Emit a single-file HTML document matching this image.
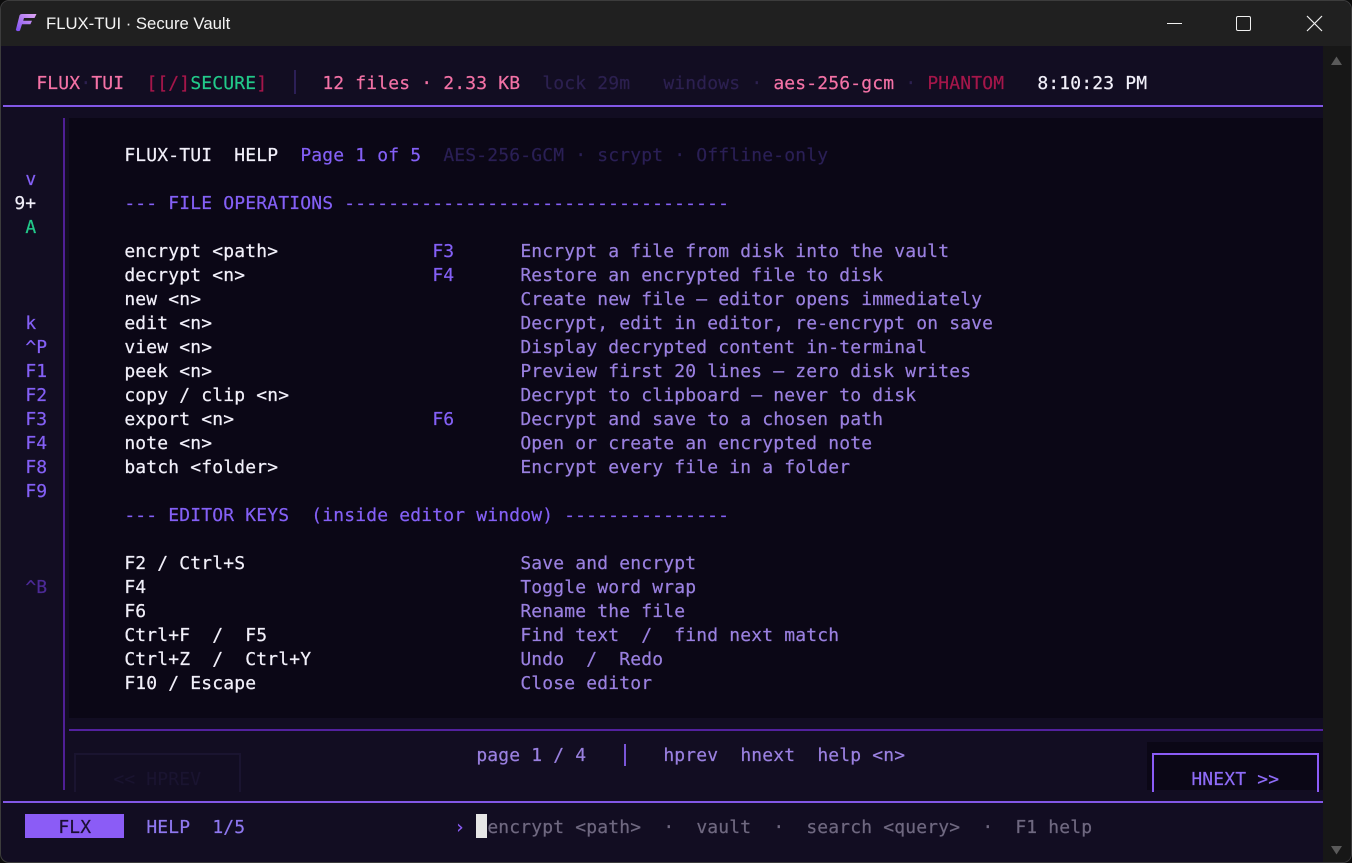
<!DOCTYPE html>
<html><head><meta charset="utf-8">
<style>
html,body{margin:0;padding:0;width:1352px;height:863px;overflow:hidden;background:#0c0c0c}
#w{position:absolute;left:0;top:0;width:1350px;height:861px;border:1px solid #3c3c3c;border-radius:9px;overflow:hidden;background:#120d22}
#r{position:absolute;left:-1px;top:-1px;width:1352px;height:863px}
.b{position:absolute}
.t{position:absolute;margin:1px 0 0 -.7px;font-family:"DejaVu Sans Mono","Liberation Mono",monospace;font-size:18px;line-height:24px;height:24px;white-space:pre;letter-spacing:.16px;color:#fff;-webkit-text-stroke:.2px currentColor}
.w{color:#f2f0fa}.p{color:#8b5cf6}.d{color:#9a80e0}.v{color:#8460f6}.k{color:#f472a6}.c{color:#a5164a}.g{color:#22c98a}.m{color:#2c2050}.m2{color:#2a1f55}
.dim{color:#6f6880}
</style></head><body>
<div id="w"><div id="r">
<div class="b" style="left:0;top:0;width:1352px;height:46px;background:#202020"></div>
<svg class="b" style="left:14px;top:13px" width="24" height="20" viewBox="0 0 24 20"><defs><linearGradient id="f" x1="0" y1="1" x2="1" y2="0"><stop offset="0" stop-color="#7c4df0"/><stop offset="1" stop-color="#e2a8f5"/></linearGradient></defs><path d="M5.5 2.5Q6 1 8 1H22.5L20.5 5H10L9.2 7.8H18L16.4 11.2H8L6 17.5Q5 18.5 3 18L1.8 17Z" fill="url(#f)"/></svg>
<div class="b" style="left:46px;top:13px;font:16.7px/22px 'Liberation Sans',sans-serif;color:#f4f4f4;white-space:pre">FLUX-TUI · Secure Vault</div>
<div class="b" style="left:1167px;top:23px;width:15px;height:1px;background:#f0f0f0"></div>
<div class="b" style="left:1236px;top:16px;width:13px;height:13px;border:1.3px solid #f0f0f0;border-radius:2px"></div>
<svg class="b" style="left:1306px;top:15px" width="17" height="17" viewBox="0 0 17 17"><path d="M1 1L16 16M16 1L1 16" stroke="#f0f0f0" stroke-width="1.2" fill="none"/></svg>

<div class="b" style="left:1323px;top:46px;width:29px;height:817px;background:#171717"></div>
<svg class="b" style="left:1330px;top:56px" width="13" height="10"><path d="M6.5 0.5L12 9H1Z" fill="#5a5a5a"/></svg>
<svg class="b" style="left:1330px;top:845px" width="13" height="10"><path d="M1 1H12L6.5 9.5Z" fill="#5a5a5a"/></svg>

<div class="b" style="left:3px;top:105px;width:1320px;height:2px;background:#8257e6"></div>
<div class="b" style="left:294px;top:70px;width:2px;height:24px;background:#2c1f57"></div>
<div class="b" style="left:69px;top:118px;width:1254px;height:600px;background:#0b0716"></div>
<div class="b" style="left:63px;top:118px;width:2px;height:672px;background:#4f1f96"></div>
<div class="b" style="left:69px;top:729px;width:1254px;height:2px;background:#53219f"></div>
<div class="b" style="left:624px;top:744px;width:2px;height:22px;background:#7a55d8"></div>
<div class="b" style="left:1147px;top:742px;width:176px;height:48px;background:#0b0716"></div>
<div class="b" style="left:1152px;top:753px;width:163px;height:37px;border:2px solid #8b5cf6;border-bottom:0"></div>
<div class="b" style="left:74px;top:753px;width:163px;height:37px;border:2px solid #1a1430;border-bottom:0"></div>
<div class="b" style="left:3px;top:801px;width:1320px;height:2px;background:#8257e6"></div>
<div class="b" style="left:25px;top:814px;width:99px;height:24px;background:#8b5cf6"></div>
<div class="b" style="left:476px;top:814px;width:11px;height:24px;background:#e6e6e6"></div>

<span class="t k" style="left:37px;top:71px">FLUX</span><span class="t m" style="left:81px;top:71px">·</span><span class="t k" style="left:92px;top:71px">TUI</span>
<span class="t c" style="left:147px;top:71px">[[/]</span><span class="t g" style="left:191px;top:71px">SECURE</span><span class="t c" style="left:257px;top:71px">]</span>
<span class="t k" style="left:323px;top:71px">12 files · 2.33 KB</span>
<span class="t m" style="left:543px;top:71px">lock 29m</span>
<span class="t m" style="left:664px;top:71px">windows</span><span class="t m" style="left:752px;top:71px">·</span>
<span class="t k" style="left:774px;top:71px">aes-256-gcm</span><span class="t m" style="left:906px;top:71px">·</span>
<span class="t c" style="left:928px;top:71px">PHANTOM</span>
<span class="t w" style="left:1038px;top:71px">8:10:23 PM</span>

<span class="t v" style="left:26px;top:167px">v</span>
<span class="t w" style="left:15px;top:191px">9+</span>
<span class="t g" style="left:26px;top:215px">A</span>
<span class="t v" style="left:26px;top:311px">k</span>
<span class="t v" style="left:26px;top:335px">^P</span>
<span class="t v" style="left:26px;top:359px">F1</span>
<span class="t v" style="left:26px;top:383px">F2</span>
<span class="t v" style="left:26px;top:407px">F3</span>
<span class="t v" style="left:26px;top:431px">F4</span>
<span class="t v" style="left:26px;top:455px">F8</span>
<span class="t v" style="left:26px;top:479px">F9</span>
<span class="t" style="left:26px;top:575px;color:#4c2a96">^B</span>

<span class="t w" style="left:125px;top:143px">FLUX-TUI  HELP</span>
<span class="t v" style="left:301px;top:143px">Page 1 of 5</span>
<span class="t m2" style="left:444px;top:143px">AES-256-GCM · scrypt · Offline-only</span>
<span class="t v" style="left:125px;top:191px">--- FILE OPERATIONS -----------------------------------</span>

<span class="t w" style="left:125px;top:239px">encrypt &lt;path&gt;</span><span class="t v" style="left:433px;top:239px">F3</span><span class="t d" style="left:521px;top:239px">Encrypt a file from disk into the vault</span>
<span class="t w" style="left:125px;top:263px">decrypt &lt;n&gt;</span><span class="t v" style="left:433px;top:263px">F4</span><span class="t d" style="left:521px;top:263px">Restore an encrypted file to disk</span>
<span class="t w" style="left:125px;top:287px">new &lt;n&gt;</span><span class="t d" style="left:521px;top:287px">Create new file — editor opens immediately</span>
<span class="t w" style="left:125px;top:311px">edit &lt;n&gt;</span><span class="t d" style="left:521px;top:311px">Decrypt, edit in editor, re-encrypt on save</span>
<span class="t w" style="left:125px;top:335px">view &lt;n&gt;</span><span class="t d" style="left:521px;top:335px">Display decrypted content in-terminal</span>
<span class="t w" style="left:125px;top:359px">peek &lt;n&gt;</span><span class="t d" style="left:521px;top:359px">Preview first 20 lines — zero disk writes</span>
<span class="t w" style="left:125px;top:383px">copy / clip &lt;n&gt;</span><span class="t d" style="left:521px;top:383px">Decrypt to clipboard — never to disk</span>
<span class="t w" style="left:125px;top:407px">export &lt;n&gt;</span><span class="t v" style="left:433px;top:407px">F6</span><span class="t d" style="left:521px;top:407px">Decrypt and save to a chosen path</span>
<span class="t w" style="left:125px;top:431px">note &lt;n&gt;</span><span class="t d" style="left:521px;top:431px">Open or create an encrypted note</span>
<span class="t w" style="left:125px;top:455px">batch &lt;folder&gt;</span><span class="t d" style="left:521px;top:455px">Encrypt every file in a folder</span>

<span class="t v" style="left:125px;top:503px">--- EDITOR KEYS  (inside editor window) ---------------</span>

<span class="t w" style="left:125px;top:551px">F2 / Ctrl+S</span><span class="t d" style="left:521px;top:551px">Save and encrypt</span>
<span class="t w" style="left:125px;top:575px">F4</span><span class="t d" style="left:521px;top:575px">Toggle word wrap</span>
<span class="t w" style="left:125px;top:599px">F6</span><span class="t d" style="left:521px;top:599px">Rename the file</span>
<span class="t w" style="left:125px;top:623px">Ctrl+F  /  F5</span><span class="t d" style="left:521px;top:623px">Find text  /  find next match</span>
<span class="t w" style="left:125px;top:647px">Ctrl+Z  /  Ctrl+Y</span><span class="t d" style="left:521px;top:647px">Undo  /  Redo</span>
<span class="t w" style="left:125px;top:671px">F10 / Escape</span><span class="t d" style="left:521px;top:671px">Close editor</span>

<span class="t d" style="left:477px;top:743px">page 1 / 4</span>
<span class="t d" style="left:664px;top:743px">hprev</span>
<span class="t d" style="left:741px;top:743px">hnext</span>
<span class="t d" style="left:818px;top:743px">help &lt;n&gt;</span>
<span class="t" style="left:114px;top:767px;color:#1a1430">&lt;&lt; HPREV</span>
<span class="t v" style="left:1192px;top:767px;color:#8f6cf8">HNEXT &gt;&gt;</span>

<span class="t" style="left:59px;top:815px;color:#1a0f33">FLX</span>
<span class="t v" style="left:147px;top:815px;color:#8f78f0">HELP</span>
<span class="t v" style="left:213px;top:815px;color:#8f78f0">1/5</span>
<span class="t p" style="left:455px;top:815px">›</span>
<span class="t dim" style="left:488px;top:815px">encrypt &lt;path&gt;</span>
<span class="t dim" style="left:664px;top:815px">·</span>
<span class="t dim" style="left:697px;top:815px">vault</span>
<span class="t dim" style="left:774px;top:815px">·</span>
<span class="t dim" style="left:807px;top:815px">search &lt;query&gt;</span>
<span class="t dim" style="left:983px;top:815px">·</span>
<span class="t dim" style="left:1016px;top:815px">F1 help</span>
</div></div>
</body></html>
